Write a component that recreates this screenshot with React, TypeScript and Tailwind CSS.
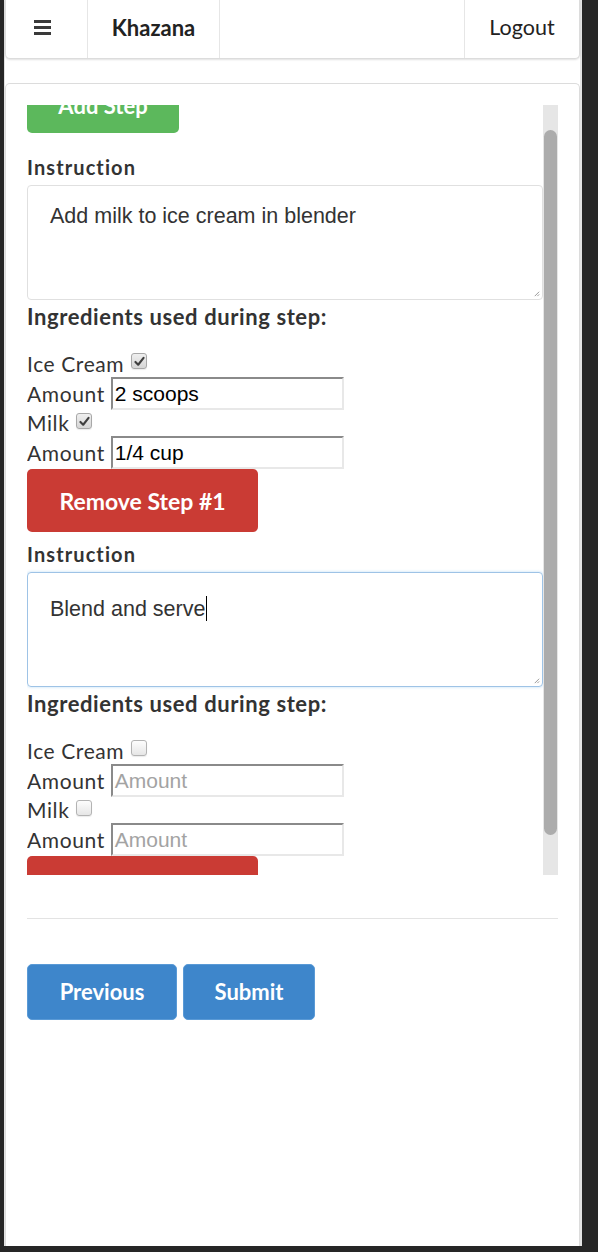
import React from 'react';

type Ingredient = { name: string; checked: boolean; amount: string };

type Step = { instruction: string; focused: boolean; ingredients: Ingredient[] };

const steps: Step[] = [
  {
    instruction: 'Add milk to ice cream in blender',
    focused: false,
    ingredients: [
      { name: 'Ice Cream', checked: true, amount: '2 scoops' },
      { name: 'Milk', checked: true, amount: '1/4 cup' },
    ],
  },
  {
    instruction: 'Blend and serve',
    focused: true,
    ingredients: [
      { name: 'Ice Cream', checked: false, amount: '' },
      { name: 'Milk', checked: false, amount: '' },
    ],
  },
];

function Checkbox({ checked }: { checked: boolean }) {
  return (
    <span
      className={
        checked
          ? 'ml-[7px] mt-[3px] flex h-[16px] w-[16px] items-center justify-center self-start rounded-[3px] border border-[#a8a8a8] bg-gradient-to-b from-[#efefef] to-[#d6d6d6] shadow-[0_1px_1px_rgba(0,0,0,0.08)]'
          : 'ml-[7px] mt-[3px] flex h-[16px] w-[16px] items-center justify-center self-start rounded-[3px] border border-[#b3b3b3] bg-gradient-to-b from-[#fdfdfd] to-[#e6e6e6] shadow-[0_1px_1px_rgba(0,0,0,0.08)]'
      }
    >
      {checked && (
        <svg viewBox="0 0 16 16" className="h-[13px] w-[13px]">
          <path d="M3 8.5 L6.4 12 L13 3.5" fill="none" stroke="#3f3f3f" strokeWidth="2.6" strokeLinecap="round" strokeLinejoin="round" />
        </svg>
      )}
    </span>
  );
}

function AmountInput({ value }: { value: string }) {
  return (
    <div className="ml-[6px] flex h-[33px] w-[233px] items-center border-2 border-t-[#8a8a8a] border-l-[#8a8a8a] border-r-[#e8e8e8] border-b-[#e8e8e8] bg-white pl-[2px] font-['Liberation_Sans',Arial,sans-serif] text-[21px] tracking-normal">
      {value ? <span className="text-black">{value}</span> : <span className="text-[#a3a3a3]">Amount</span>}
    </div>
  );
}

function Grip() {
  return (
    <svg viewBox="0 0 8 8" className="absolute bottom-[2px] right-[2px] h-[7px] w-[7px]">
      <path d="M7 2 L2 7 M7 5 L5 7" stroke="#8a8a8a" strokeWidth="1" />
    </svg>
  );
}

function StepSection({ step, index }: { step: Step; index: number }) {
  return (
    <div>
      <div className="h-[23px] text-[20px] font-bold leading-[23px] tracking-[1.1px] text-[#333]">Instruction</div>
      <div
        className={
          step.focused
            ? 'relative mt-[6px] h-[115px] rounded-[4px] border border-[#9ec3e6] px-[22px] pt-[18px] font-[\'Liberation_Sans\',Arial,sans-serif] text-[21.5px] leading-[24px] text-[#333] shadow-[0_0_3px_rgba(102,175,233,0.45)]'
            : 'relative mt-[6px] h-[115px] rounded-[4px] border border-[#e0e0e0] px-[22px] pt-[18px] font-[\'Liberation_Sans\',Arial,sans-serif] text-[21.5px] leading-[24px] text-[#333]'
        }
      >
        <span>{step.instruction}</span>
        {step.focused && <span className="ml-[1px] inline-block h-[25px] w-px translate-y-[5px] bg-black" />}
        <Grip />
      </div>
      <div className="mt-[4px] h-[25px] text-[22px] font-bold leading-[25px] tracking-[0.6px] text-[#333]">
        Ingredients used during step:
      </div>
      <div className="mt-[21px] text-[21px] leading-[24px] tracking-[0.6px] text-[#333]">
        {step.ingredients.map((ing, i) => (
          <div key={ing.name}>
            <div className={i === 0 ? 'flex h-[27px] items-center' : 'flex h-[26px] items-center'}>
              <span>{ing.name}</span>
              <Checkbox checked={ing.checked} />
            </div>
            <div className="flex h-[33px] items-center">
              <span>Amount</span>
              <AmountInput value={ing.amount} />
            </div>
          </div>
        ))}
      </div>
      <button className="flex h-[63px] w-[231px] items-center justify-center rounded-[5px] bg-[#ca3b34] text-[23px] font-bold leading-[26px] text-white">
        Remove Step #{index + 1}
      </button>
    </div>
  );
}

export default function App() {
  return (
    <div className="min-h-[1252px] w-[598px] bg-[#262626] font-['Lato',sans-serif]">
      <div className="ml-[4px] flex h-[1246px] w-[578px] flex-col border-l border-r-2 border-l-[#e2e2e2] border-r-[#e4e4e4] bg-white">
        {/* Top navigation */}
        <nav className="flex h-[59px] rounded-b-[5px] border border-t-0 border-[#dcdcdc] bg-white shadow-[0_1px_2px_rgba(0,0,0,0.12)]">
          <div className="flex w-[82px] items-center justify-center border-r border-[#e6e6e6] pr-[8px] pb-[3px]">
            <svg viewBox="0 0 17 16" className="h-[16px] w-[17px]">
              <rect x="0" y="0" width="17" height="3" fill="#3a3a3a" />
              <rect x="0" y="6" width="17" height="3" fill="#3a3a3a" />
              <rect x="0" y="12" width="17" height="3" fill="#3a3a3a" />
            </svg>
          </div>
          <div className="flex w-[132px] items-center justify-center border-r border-[#e6e6e6] pb-[3px] text-[22px] font-bold leading-[25px] text-[#222]">
            Khazana
          </div>
          <div className="w-[245px] border-r border-[#e6e6e6]" />
          <div className="flex flex-1 items-center justify-center pb-[3px] text-[21.5px] leading-[25px] text-[#222]">
            Logout
          </div>
        </nav>

        {/* Recipe steps card */}
        <div className="mt-[24px] flex-1 rounded-t-[5px] border border-b-0 border-[#dcdcdc] px-[21px] pt-[21px]">
          <div className="flex h-[770px]">
            <div className="flex-1 overflow-hidden">
              <div className="-mt-[27px]">
                <button className="flex h-[55px] w-[152px] items-center justify-center rounded-[5px] bg-[#5cb85c] text-[22px] font-bold leading-[25px] text-white">
                  Add Step
                </button>
                <div className="mt-[23px]">
                  <StepSection step={steps[0]} index={0} />
                </div>
                <div className="mt-[11px]">
                  <StepSection step={steps[1]} index={1} />
                </div>
              </div>
            </div>
            {/* scrollbar */}
            <div className="flex w-[15px] flex-col bg-[#e6e6e6] px-[1px] pt-[25px] pb-[40px]">
              <div className="flex-1 rounded-full bg-[#acacac]" />
            </div>
          </div>

          <div className="mt-[43px] border-t border-[#e3e3e3]" />

          <div className="mt-[45px] flex gap-[6px]">
            <button className="flex h-[56px] w-[150px] items-center justify-center rounded-[5px] border border-[#5a9ad6] bg-[#3e86cb] text-[22px] font-bold leading-[26px] text-white">
              Previous
            </button>
            <button className="flex h-[56px] w-[132px] items-center justify-center rounded-[5px] border border-[#5a9ad6] bg-[#3e86cb] text-[22px] font-bold leading-[26px] text-white">
              Submit
            </button>
          </div>
        </div>
      </div>
    </div>
  );
}
